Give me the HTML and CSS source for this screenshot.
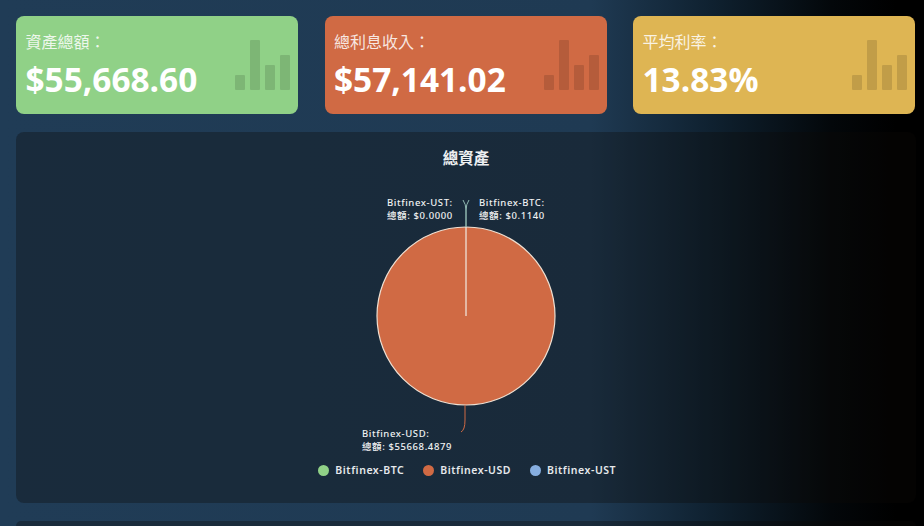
FILE: index.html
```html
<!DOCTYPE html>
<html lang="zh-Hant">
<head>
<meta charset="utf-8">
<title>總資產</title>
<link rel="stylesheet" href="styles.css">
</head>
<body>
<main class="page">
  <section class="cards">
    <article class="card card-green">
      <div class="card-text"><div class="card-label">資產總額：</div><div class="card-value">$55,668.60</div></div>
      <svg class="card-icon" viewBox="0 0 55 50"><rect x="0" y="35" width="10" height="15" rx="1"/><rect x="15" y="0" width="10" height="50" rx="1"/><rect x="30" y="25" width="10" height="25" rx="1"/><rect x="45" y="15" width="10" height="35" rx="1"/></svg>
    </article>
    <article class="card card-orange">
      <div class="card-text"><div class="card-label">總利息收入：</div><div class="card-value">$57,141.02</div></div>
      <svg class="card-icon" viewBox="0 0 55 50"><rect x="0" y="35" width="10" height="15" rx="1"/><rect x="15" y="0" width="10" height="50" rx="1"/><rect x="30" y="25" width="10" height="25" rx="1"/><rect x="45" y="15" width="10" height="35" rx="1"/></svg>
    </article>
    <article class="card card-yellow">
      <div class="card-text"><div class="card-label">平均利率：</div><div class="card-value">13.83%</div></div>
      <svg class="card-icon" viewBox="0 0 55 50"><rect x="0" y="35" width="10" height="15" rx="1"/><rect x="15" y="0" width="10" height="50" rx="1"/><rect x="30" y="25" width="10" height="25" rx="1"/><rect x="45" y="15" width="10" height="35" rx="1"/></svg>
    </article>
  </section>
  <section class="panel">
    <h2 class="panel-title">總資產</h2>
    <svg class="pie" viewBox="0 0 300 260" width="300" height="260">
      <circle class="slice" cx="150" cy="141" r="89"/>
      <line class="divider" x1="150" y1="141" x2="150" y2="52"/>
      <path class="lead-blue" d="M150 52 V36 Q150 29 147 25"/>
      <path class="lead-green" d="M150 52 V36 Q150 29 153 25"/>
      <path class="lead-orange" d="M149 230 V245 Q149 255 145 257"/>
      <text class="pie-label" x="71" y="31">Bitfinex-UST:</text>
      <text class="pie-label" x="71" y="44">總額: $0.0000</text>
      <text class="pie-label" x="163" y="31">Bitfinex-BTC:</text>
      <text class="pie-label" x="163" y="44">總額: $0.1140</text>
    </svg>
    <div class="usd-label"><div>Bitfinex-USD:</div><div>總額: $55668.4879</div></div>
    <ul class="legend">
      <li class="legend-item"><span class="dot dot-green"></span>Bitfinex-BTC</li>
      <li class="legend-item"><span class="dot dot-orange"></span>Bitfinex-USD</li>
      <li class="legend-item"><span class="dot dot-blue"></span>Bitfinex-UST</li>
    </ul>
  </section>
  <section class="panel-next"></section>
</main>
</body>
</html>
```
FILE: styles.css
```css
* { box-sizing: border-box; }
html, body { margin: 0; height: 526px; overflow: hidden; }
body {
  background: linear-gradient(90deg, #203c56 0%, #1f3a53 64%, #0f2130 77%, #03070a 90%, #000 97%);
  font-family: "Noto Sans", "Open Sans", "Noto Sans CJK TC", sans-serif;
  color: #fff;
}
.page { padding: 16px 8px 0 16px; display: flex; flex-direction: column; gap: 18px; }
.cards { display: grid; grid-template-columns: repeat(3, 282px); column-gap: 26.5px; }
.card {
  height: 98px; border-radius: 8px; padding: 15px 8px 0 9.5px;
  display: flex; justify-content: space-between; align-items: flex-start;
}
.card-green { background: #90d187; }
.card-orange { background: #d06a44; }
.card-yellow { background: #deb553; }
.card-text { display: flex; flex-direction: column; }
.card-label { font-size: 16px; line-height: 20px; color: rgba(255,255,255,.85); font-family: "Noto Sans CJK TC", sans-serif; }
.card-value { font-size: 33.4px; line-height: 44px; font-weight: 700; margin-top: 6px; font-family: "Open Sans", "Noto Sans", sans-serif; }
.card-icon { width: 55px; height: 50px; margin: 9px 0 0; fill: rgba(0,0,0,.13); flex: none; }
.panel {
  position: relative; height: 371px; width: 900px; border-radius: 8px;
  background: rgba(12,8,5,.32);
  display: flex; flex-direction: column; align-items: center;
}
.panel-title { margin: 15px 0 0; font-size: 15.5px; line-height: 20px; font-weight: 600; color: #eef0f2; font-family: "Noto Sans CJK TC", sans-serif; }
.pie { display: block; margin-top: 8px; flex: none; }
.slice { fill: #d06a44; stroke: #efe0d2; stroke-width: 1.2; }
.divider { stroke: #f2ece4; stroke-width: 1.2; }
.lead-blue, .lead-green { fill: none; stroke: #8fb8b0; stroke-width: 1; }
.lead-orange { fill: none; stroke: #d06a44; stroke-width: 1; }
.pie-label { fill: #f0f1f2; font-size: 9.5px; font-weight: 500; letter-spacing: .6px; font-family: "Noto Sans", "Noto Sans CJK TC", sans-serif; }
.usd-label { position: absolute; left: 346px; top: 295px; font-size: 9.5px; line-height: 13px; font-weight: 500; letter-spacing: .6px; color: #f0f1f2; font-family: "Noto Sans", "Noto Sans CJK TC", sans-serif; }
.legend { list-style: none; margin: 28px 0 0; padding: 0 0 0 2.5px; display: flex; gap: 19px; }
.legend-item { display: flex; align-items: center; gap: 6px; font-size: 10.5px; line-height: 14px; font-weight: 600; letter-spacing: .55px; color: #e6e9ec; }
.dot { width: 11px; height: 11px; border-radius: 50%; }
.dot-green { background: #90d187; }
.dot-orange { background: #d06a44; }
.dot-blue { background: #86aee0; }
.panel-next { height: 5px; width: 900px; border-radius: 8px 8px 0 0; background: rgba(12,8,5,.32); }
```
